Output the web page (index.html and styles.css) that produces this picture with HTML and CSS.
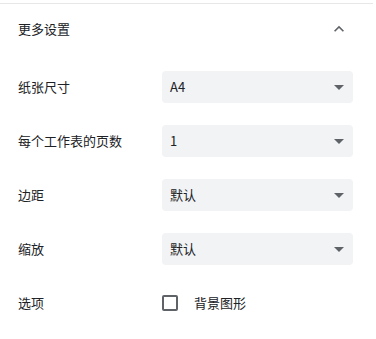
FILE: index.html
```html
<!DOCTYPE html>
<html lang="zh-CN">
<head>
<meta charset="utf-8">
<link rel="stylesheet" href="styles.css">
</head>
<body>
<div class="panel">
  <div class="header">
    <span class="txt">更多设置</span>
    <svg class="chevron" width="20" height="20" viewBox="0 0 24 24"><path d="M7.41 15.41L12 10.83l4.59 4.58L18 14l-6-6-6 6z" fill="#5f6368"/></svg>
  </div>
  <div class="rows">
    <div class="row">
      <span class="label txt">纸张尺寸</span>
      <div class="select"><span class="txt">A4</span><svg width="24" height="24" viewBox="0 0 24 24"><path d="M7 10l5 5 5-5z" fill="#5f6368"/></svg></div>
    </div>
    <div class="row">
      <span class="label txt">每个工作表的页数</span>
      <div class="select"><span class="txt">1</span><svg width="24" height="24" viewBox="0 0 24 24"><path d="M7 10l5 5 5-5z" fill="#5f6368"/></svg></div>
    </div>
    <div class="row">
      <span class="label txt">边距</span>
      <div class="select"><span class="txt">默认</span><svg width="24" height="24" viewBox="0 0 24 24"><path d="M7 10l5 5 5-5z" fill="#5f6368"/></svg></div>
    </div>
    <div class="row">
      <span class="label txt">缩放</span>
      <div class="select"><span class="txt">默认</span><svg width="24" height="24" viewBox="0 0 24 24"><path d="M7 10l5 5 5-5z" fill="#5f6368"/></svg></div>
    </div>
    <div class="row">
      <span class="label txt">选项</span>
      <label class="check"><span class="box"></span><span class="txt">背景图形</span></label>
    </div>
  </div>
</div>
</body>
</html>
```
FILE: styles.css
```css
html, body {
  margin: 0;
  padding: 0;
  background: #fff;
}
body {
  font-family: "Noto Sans CJK SC", "Noto Sans", sans-serif;
  font-size: 13px;
  color: #202124;
}
.panel {
  margin-top: 3px;
  width: 373px;
  border-top: 1px solid #e6e7e9;
}
.header {
  height: 50px;
  display: flex;
  align-items: center;
  justify-content: space-between;
  padding: 0 24px 0 18px;
}
.txt {
  position: relative;
  top: -1px;
}
.chevron {
  display: block;
}
.rows {
  padding-top: 6px;
}
.row {
  height: 54px;
  display: flex;
  align-items: center;
  padding-left: 18px;
}
.label {
  width: 144px;
}
.select {
  width: 191px;
  height: 32px;
  box-sizing: border-box;
  background: #f1f3f4;
  border-radius: 4px;
  display: flex;
  align-items: center;
  justify-content: space-between;
  padding: 0 2px 0 8px;
}
.select svg {
  display: block;
}
.check {
  display: flex;
  align-items: center;
}
.box {
  width: 16px;
  height: 16px;
  box-sizing: border-box;
  border: 2px solid #5f6368;
  border-radius: 2px;
  margin-right: 16px;
}
```
